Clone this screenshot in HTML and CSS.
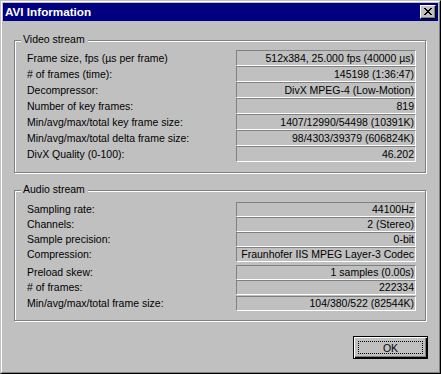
FILE: index.html
```html
<!DOCTYPE html>
<html>
<head>
<meta charset="utf-8">
<link rel="stylesheet" href="styles.css">
</head>
<body>
<div class="window">
  <div class="frame">
    <div class="titlebar">
      <span class="title">AVI Information</span>
      <span class="close">
        <svg width="8" height="7" viewBox="0 0 8 7" shape-rendering="crispEdges">
          <path d="M0 0h2v1H0zM6 0h2v1H6zM1 1h2v1H1zM5 1h2v1H5zM2 2h4v1H2zM3 3h2v1H3zM2 4h4v1H2zM1 5h2v1H1zM5 5h2v1H5zM0 6h2v1H0zM6 6h2v1H6z" fill="#000"/>
        </svg>
      </span>
    </div>
    <div class="content">
      <div class="group video">
        <span class="legend">Video stream</span>
        <div class="rows">
          <div class="row"><span class="label">Frame size, fps (µs per frame)</span><span class="value">512x384, 25.000 fps (40000 µs)</span></div>
          <div class="row"><span class="label"># of frames (time):</span><span class="value">145198 (1:36:47)</span></div>
          <div class="row"><span class="label">Decompressor:</span><span class="value">DivX MPEG-4 (Low-Motion)</span></div>
          <div class="row"><span class="label">Number of key frames:</span><span class="value">819</span></div>
          <div class="row"><span class="label">Min/avg/max/total key frame size:</span><span class="value">1407/12990/54498 (10391K)</span></div>
          <div class="row"><span class="label">Min/avg/max/total delta frame size:</span><span class="value">98/4303/39379 (606824K)</span></div>
          <div class="row"><span class="label">DivX Quality (0-100):</span><span class="value">46.202</span></div>
        </div>
      </div>
      <div class="group audio">
        <span class="legend">Audio stream</span>
        <div class="rows">
          <div class="row"><span class="label">Sampling rate:</span><span class="value">44100Hz</span></div>
          <div class="row"><span class="label">Channels:</span><span class="value">2 (Stereo)</span></div>
          <div class="row"><span class="label">Sample precision:</span><span class="value">0-bit</span></div>
          <div class="row"><span class="label">Compression:</span><span class="value">Fraunhofer IIS MPEG Layer-3 Codec</span></div>
          <div class="row gap3"><span class="label">Preload skew:</span><span class="value">1 samples (0.00s)</span></div>
          <div class="row"><span class="label"># of frames:</span><span class="value">222334</span></div>
          <div class="row gap1"><span class="label">Min/avg/max/total frame size:</span><span class="value">104/380/522 (82544K)</span></div>
        </div>
      </div>
      <div class="buttons">
        <button class="btn default"><span class="focus">OK</span></button>
      </div>
    </div>
  </div>
</div>
</body>
</html>
```

FILE: styles.css
```css
* { box-sizing: border-box; }
html, body { margin: 0; padding: 0; background: #c0c0c0; }
body {
  font-family: "Liberation Sans", Arial, sans-serif;
  font-size: 10.5px;
  color: #000;
}
.window {
  width: 441px;
  height: 374px;
  background: #c0c0c0;
  border: 1px solid;
  border-color: #c0c0c0 #000 #000 #c0c0c0;
}
.frame {
  height: 100%;
  border: 1px solid;
  border-color: #fff #808080 #808080 #fff;
  padding: 1px;
}
.titlebar {
  height: 18px;
  background: #000080;
  display: flex;
  align-items: center;
  justify-content: space-between;
  padding: 0 2px 0 2px;
}
.title {
  color: #fff;
  font-weight: bold;
  font-size: 11.7px;
  line-height: 18px;
}
.close {
  width: 16px;
  height: 14px;
  background: #c0c0c0;
  border: 1px solid;
  border-color: #fff #000 #000 #fff;
  box-shadow: inset -1px -1px 0 #808080;
  display: flex;
  align-items: flex-start;
  justify-content: flex-start;
  padding: 2px 0 0 3px;
}
.close svg { display: block; }
.content {
  padding: 0 12px 0 11px;
}
.group {
  position: relative;
  border: 1px solid #808080;
  box-shadow: 1px 1px 0 #fff, inset 1px 1px 0 #fff;
}
.video {
  margin-top: 19px;
  padding: 9px 9px 10px 12px;
}
.audio {
  margin-top: 17px;
  padding: 11px 9px 9px 12px;
}
.legend {
  position: absolute;
  top: -8px;
  left: 6px;
  padding: 0 3px 0 2px;
  background: #c0c0c0;
  line-height: 13px;
}
.row {
  display: grid;
  grid-template-columns: 1fr 180px;
  align-items: center;
}
.video .row { height: 16px; }
.audio .row { height: 15px; }
.audio .gap3 { margin-top: 3px; }
.audio .gap1 { margin-top: 1px; }
.label { white-space: nowrap; line-height: 13px; }
.value {
  height: 100%;
  border: 1px solid;
  border-color: #808080 #fff #fff #808080;
  text-align: right;
  padding-right: 1px;
  white-space: nowrap;
  overflow: hidden;
  display: flex;
  align-items: center;
  justify-content: flex-end;
  line-height: 13px;
}
.buttons {
  display: flex;
  justify-content: flex-end;
  margin-top: 15px;
  margin-right: -2px;
}
.btn {
  width: 75px;
  height: 23px;
  background: #c0c0c0;
  border: 1px solid #000;
  box-shadow: inset 1px 1px 0 #fff, inset -1px -1px 0 #000, inset -2px -2px 0 #808080;
  font-family: "Liberation Sans", Arial, sans-serif;
  font-size: 10.5px;
  color: #000;
  padding: 3px;
  margin: 0;
  display: flex;
}
.focus {
  flex: 1;
  border: 1px dotted #000;
  display: flex;
  align-items: center;
  justify-content: center;
  margin: 1px;
}
```
